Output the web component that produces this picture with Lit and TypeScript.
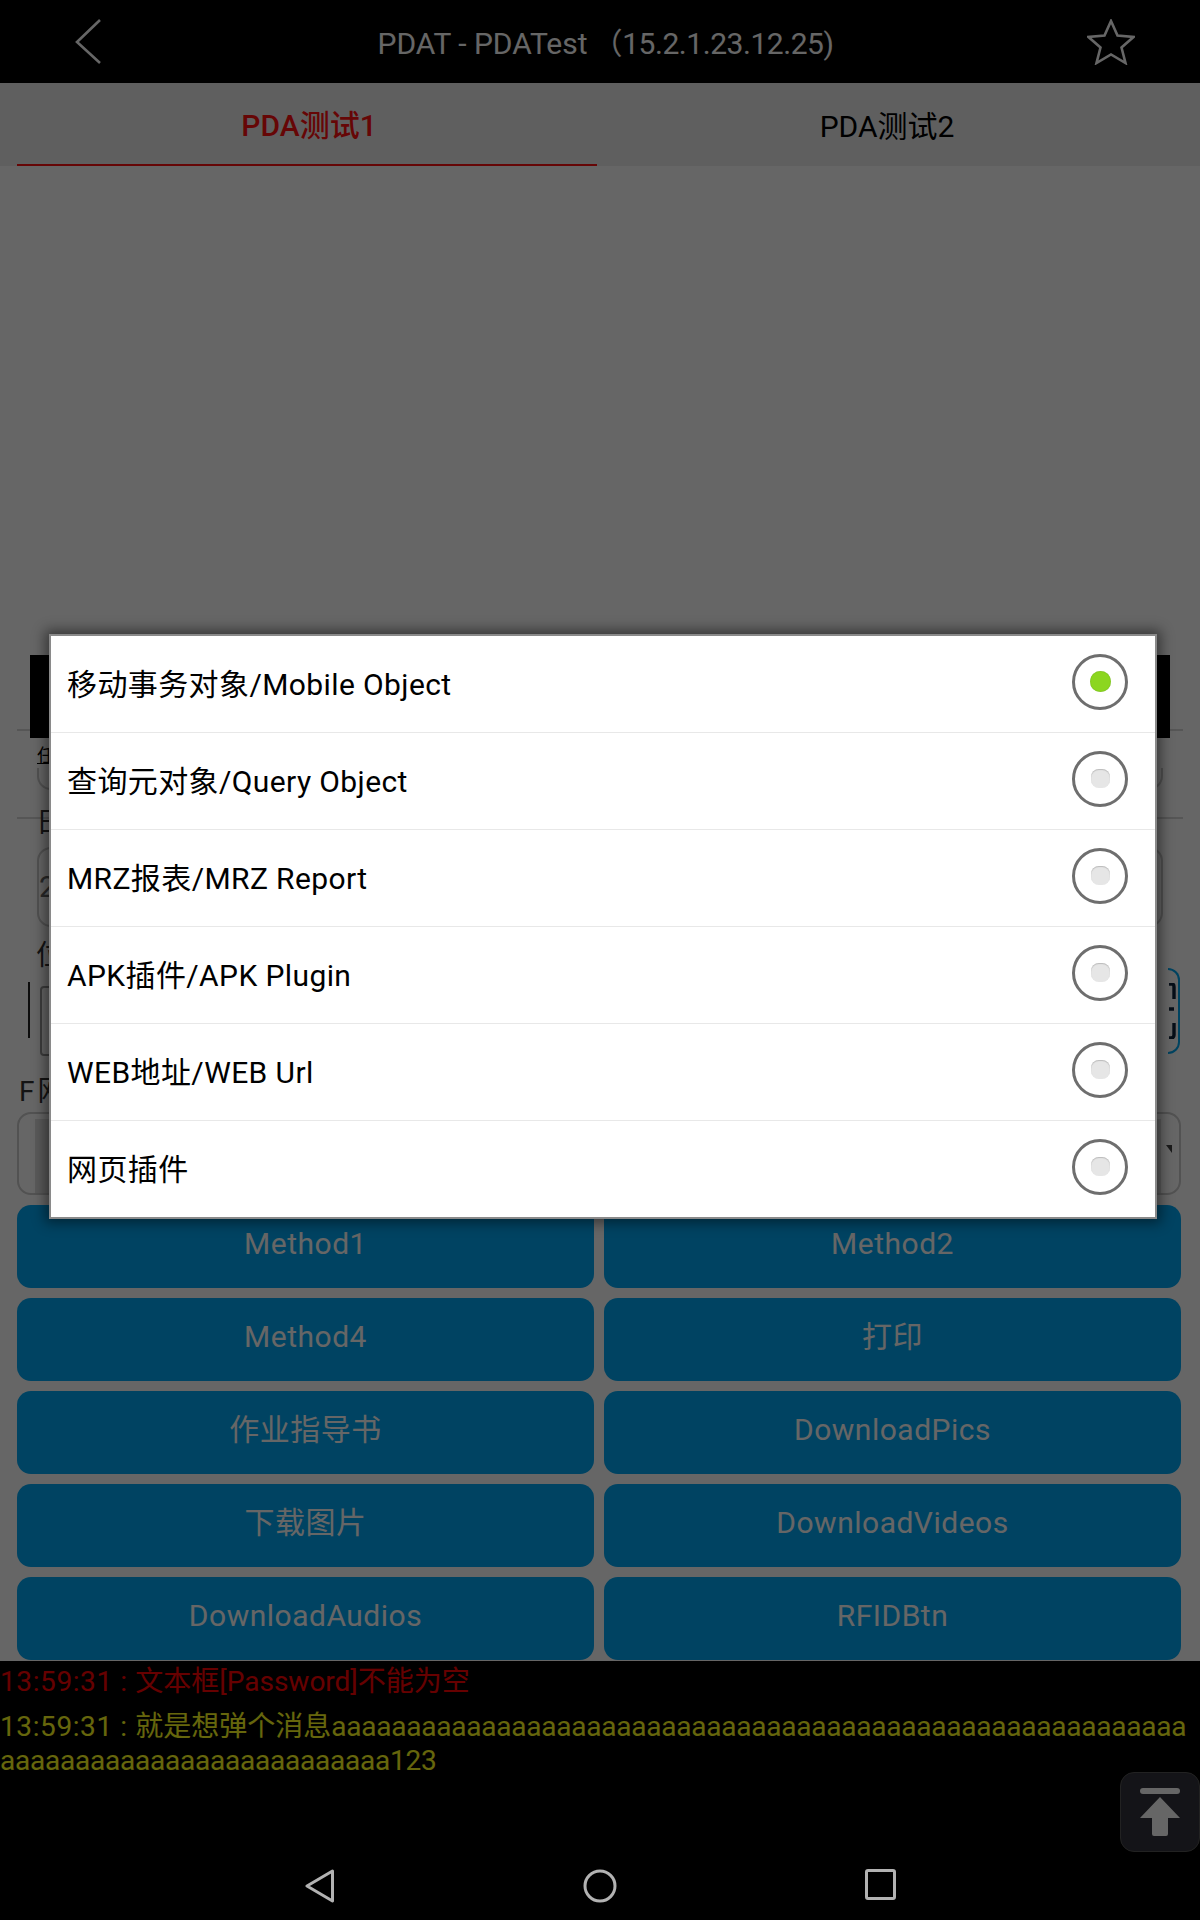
import { LitElement, css, html } from "lit";
import { customElement } from "lit/decorators.js";

const options = [
  "移动事务对象/Mobile Object",
  "查询元对象/Query Object",
  "MRZ报表/MRZ Report",
  "APK插件/APK Plugin",
  "WEB地址/WEB Url",
  "网页插件",
];

const buttons = [
  "Method1", "Method2",
  "Method4", "打印",
  "作业指导书", "DownloadPics",
  "下载图片", "DownloadVideos",
  "DownloadAudios", "RFIDBtn",
];

@customElement("app-root")
export class AppRoot extends LitElement {
  render() {
    return html`
      <div class="screen">
        <header class="top">
          <svg class="back" width="27" height="47" viewBox="0 0 27 47">
            <path d="M25 2 L2 24 L25 45" fill="none" stroke="#fff" stroke-width="2.6" />
          </svg>
          <span class="title">PDAT - PDATest<span class="ver">（15.2.1.23.12.25)</span></span>
          <svg class="star" width="48" height="46" viewBox="0 0 48 46">
            <path d="M24 2 L30.5 16.5 L46.5 18 L34.5 28.5 L38.5 44 L24 35.5 L9.5 44 L13.5 28.5 L1.5 18 L17.5 16.5 Z"
              fill="none" stroke="#fff" stroke-width="2.6" />
          </svg>
        </header>

        <nav class="tabs">
          <div class="tab active">PDA测试1</div>
          <div class="tab">PDA测试2</div>
        </nav>

        <main class="page">
          <div class="spacer"></div>
          <div class="black-bar"></div>
          <div class="form">
            <div class="label under">任</div>
            <div class="field first"></div>
            <div class="rule"></div>
            <div class="label date">日</div>
            <div class="field second">2</div>
            <div class="rule low"></div>
            <div class="label third">位</div>
            <div class="scan-row">
              <i class="tick"></i>
              <div class="scan-input"></div>
              <div class="scan-btn">
                <svg width="10" height="56" viewBox="0 0 10 56">
                  <path d="M1 1 H4 Q6 1 6 4 V16 M1 26 H6 M6 40 V52 Q6 55 3 55 H1" fill="none" stroke="#10243c" stroke-width="3.4" />
                </svg>
              </div>
            </div>
            <div class="label fourth"><span>F</span><span>网</span></div>
            <div class="select">
              <div class="select-inner"></div>
              <i class="caret"></i>
            </div>
          </div>

          <section class="grid">
            ${buttons.map((b) => html`<button class="btn">${b}</button>`)}
          </section>

          <section class="log">
            <div class="red"><span class="time">13:59:31 : </span>文本框[Password]不能为空</div>
            <div class="yellow"><span class="time">13:59:31 : </span>就是想弹个消息<span class="tail">${"a".repeat(83)}123</span></div>
          </section>
        </main>

        <div class="scrim"></div>

        <div class="to-top">
          <svg width="40" height="48" viewBox="0 0 40 48">
            <rect x="0" y="0" width="40" height="6" rx="3" fill="#fff" />
            <path d="M20 9 L40 30 H28 V46 Q28 48 26 48 H14 Q12 48 12 46 V30 H0 Z" fill="#fff" />
          </svg>
        </div>

        <div class="dialog">
          ${options.map(
            (o, i) => html`
              <div class="row">
                <span class="row-text">${o}</span>
                <span class="radio"><i class=${i === 0 ? "dot on" : "dot"}></i></span>
              </div>
            `
          )}
        </div>

        <footer class="sysnav">
          <svg width="30" height="34" viewBox="0 0 30 34">
            <path d="M27.5 2 L2 17 L27.5 32 Z" fill="none" stroke="#b2b2b2" stroke-width="3" stroke-linejoin="round" />
          </svg>
          <svg width="34" height="34" viewBox="0 0 34 34">
            <circle cx="17" cy="17" r="15" fill="none" stroke="#b2b2b2" stroke-width="3" />
          </svg>
          <svg width="31" height="31" viewBox="0 0 31 31">
            <rect x="1.5" y="1.5" width="28" height="28" rx="1.5" fill="none" stroke="#b2b2b2" stroke-width="3" />
          </svg>
        </footer>
      </div>
    `;
  }

  static styles = css`
    :host {
      display: block;
      width: 1200px;
      height: 1920px;
      background: #000;
      font-family: Roboto, "Noto Sans CJK SC", sans-serif;
      overflow: hidden;
    }
    .screen {
      position: relative;
      height: 1920px;
      display: flex;
      flex-direction: column;
      overflow: hidden;
    }

    /* title bar */
    .top {
      height: 83px;
      flex: none;
      background: #000;
      color: #fff;
      display: flex;
      align-items: center;
      justify-content: space-between;
      padding: 0 65px 0 75px;
    }
    .title {
      font-size: 30px;
      white-space: nowrap;
      margin: -2px 0 0 22px;
    }
    .ver {
      margin-left: 5px;
      letter-spacing: -0.45px;
    }

    /* tabs */
    .tabs {
      height: 83px;
      flex: none;
      box-sizing: border-box;
      background: #eee;
      padding: 0 23px 0 17px;
      display: grid;
      grid-template-columns: 1fr 1fr;
    }
    .tab {
      display: flex;
      align-items: center;
      justify-content: center;
      font-size: 30px;
      color: #000;
      padding-bottom: 2px;
    }
    .tab.active {
      color: #ff1010;
      font-weight: 500;
      padding-left: 4px;
      border-bottom: 2px solid #ff1010;
    }

    /* page behind the dialog */
    .page {
      flex: 1;
      display: flex;
      flex-direction: column;
      background: #fff;
      min-height: 0;
    }
    .spacer {
      height: 563px;
      flex: none;
      margin: 0 17px;
      border-bottom: 2px solid #d8d8d8;
    }
    .black-bar {
      height: 83px;
      flex: none;
      margin: -76px 30px 0;
      background: #000;
    }
    .form {
      height: 467px;
      flex: none;
      display: flex;
      flex-direction: column;
    }
    .label {
      font-size: 28px;
      line-height: 32px;
      color: #333;
      padding-left: 36px;
      flex: none;
    }
    .label.under {
      margin-top: 6px;
      font-size: 18px;
      line-height: 24px;
      padding-left: 37px;
      text-decoration: underline;
      color: #000;
    }
    .field {
      flex: none;
      margin: 0 37px;
      border: 2px solid #ccc;
      border-radius: 14px;
      box-sizing: border-box;
    }
    .field.first {
      height: 22px;
      border-top: none;
      border-top-left-radius: 0;
      border-top-right-radius: 0;
    }
    .rule {
      height: 2px;
      flex: none;
      margin: 27px 17px 0;
      background: #d8d8d8;
    }
    .rule.low {
      margin-top: -21px;
      position: relative;
      z-index: -1;
    }
    .label.date {
      margin-top: -12px;
    }
    .field.second {
      height: 80px;
      margin-top: 8px;
      font-size: 30px;
      line-height: 76px;
      color: #666;
    }
    .label.third {
      margin-top: 32px;
    }
    .scan-row {
      display: flex;
      height: 84px;
      flex: none;
      margin-top: -4px;
      padding: 0 20px 0 28px;
      align-items: flex-start;
    }
    .tick {
      width: 2px;
      height: 56px;
      margin-top: 14px;
      background: #222;
      flex: none;
    }
    .scan-input {
      flex: 1;
      height: 66px;
      margin: 18px 0 0 10px;
      border: 2px solid #999;
      border-radius: 4px;
    }
    .scan-btn {
      width: 10px;
      height: 82px;
      flex: none;
      margin-left: 12px;
      display: flex;
      align-items: center;
      border: 2.5px solid #00a8f0;
      border-left: none;
      border-radius: 0 14px 14px 0;
    }
    .label.fourth {
      display: flex;
      gap: 3px;
      padding-left: 19px;
      margin-top: 24px;
    }
    .select {
      height: 83px;
      flex: none;
      margin: 4px 19px 0 17px;
      box-sizing: border-box;
      border: 2px solid #ccc;
      border-radius: 14px;
      padding: 5px 2px 0 16px;
      display: flex;
      gap: 5px;
    }
    .select-inner {
      flex: 1;
      background: #e0e0e0;
    }
    .caret {
      width: 0;
      height: 0;
      margin: 26px 5px 0 0;
      border-left: 6px solid transparent;
      border-top: 8px solid #444;
    }

    /* action buttons */
    .grid {
      flex: none;
      display: grid;
      grid-template-columns: 577px 577px;
      grid-auto-rows: 83px;
      gap: 10px;
      padding: 0 19px 0 17px;
    }
    .btn {
      border: none;
      border-radius: 14px;
      background: #00a8f5;
      color: #fff;
      font: inherit;
      font-size: 30px;
      line-height: 36px;
      letter-spacing: 0.5px;
      padding: 0 0 6px;
    }

    /* message log */
    .log {
      flex: 1;
      margin-top: 1px;
      background: #000;
      font-size: 28px;
      line-height: 34px;
      word-break: break-all;
    }
    .time {
      letter-spacing: 0.6px;
    }
    .tail {
      letter-spacing: -0.23px;
    }
    .red {
      color: #ff0000;
      padding-top: 4px;
    }
    .yellow {
      color: #ffff20;
      margin-top: 11px;
    }

    .to-top {
      position: absolute;
      left: 1120px;
      top: 1772px;
      width: 80px;
      height: 80px;
      box-sizing: border-box;
      border: 1px solid #555;
      border-radius: 14px;
      background: #34343c;
      display: flex;
      align-items: center;
      justify-content: center;
    }

    .scrim {
      position: absolute;
      inset: 0;
      background: rgba(0, 0, 0, 0.6);
      z-index: 1;
    }

    /* option dialog */
    .dialog {
      position: absolute;
      left: 49px;
      top: 634px;
      width: 1108px;
      box-sizing: border-box;
      background: #fff;
      border: 2px solid #8a8a8a;
      box-shadow: 0 0 12px 4px rgba(0, 0, 0, 0.45);
      z-index: 2;
    }
    .row {
      height: 97px;
      box-sizing: border-box;
      display: flex;
      align-items: center;
      justify-content: space-between;
      padding: 0 27px 0 16px;
      border-bottom: 1px solid #e8e8e8;
    }
    .row:last-child {
      border-bottom: none;
      height: 96px;
    }
    .row-text {
      font-size: 30px;
      line-height: 36px;
      letter-spacing: 0.4px;
      color: #000;
      padding-top: 2px;
    }
    .radio {
      width: 56px;
      height: 56px;
      box-sizing: border-box;
      border: 3px solid #6e6e6e;
      border-radius: 50%;
      display: flex;
      align-items: center;
      justify-content: center;
      margin-bottom: 5px;
    }
    .dot {
      width: 19px;
      height: 19px;
      border-radius: 8px;
      background: #e6e6e6;
      box-shadow: inset 0 1px 1px #bbb;
    }
    .dot.on {
      width: 21px;
      height: 21px;
      border-radius: 50%;
      background: #8cd620;
      box-shadow: inset 0 0 1px #5a9a10;
    }

    /* android nav bar */
    .sysnav {
      height: 80px;
      flex: none;
      position: absolute;
      left: 0;
      right: 0;
      bottom: 0;
      z-index: 3;
      display: grid;
      grid-template-columns: 278px 282px auto;
      padding: 29px 0 0 305px;
      box-sizing: border-box;
      align-items: start;
    }
  `;
}
